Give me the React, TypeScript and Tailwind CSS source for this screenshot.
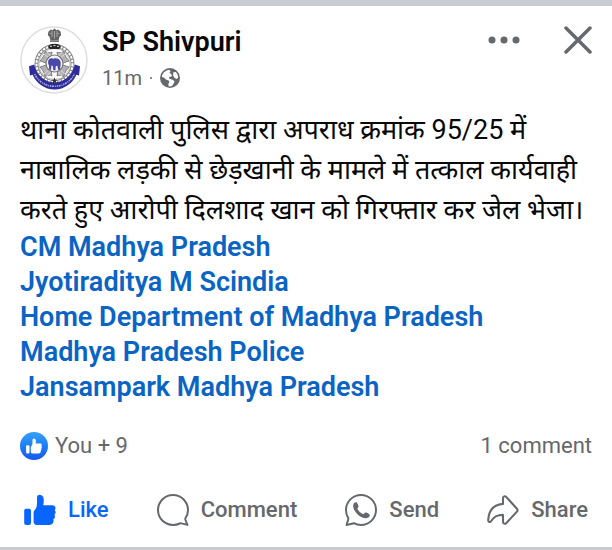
import type { ReactNode } from "react";

interface PostAction {
  label: string;
  icon: ReactNode;
  className: string;
}

const mentions = [
  "CM Madhya Pradesh",
  "Jyotiraditya M Scindia",
  "Home Department of Madhya Pradesh",
  "Madhya Pradesh Police",
  "Jansampark Madhya Pradesh",
];

function ThumbIcon({ className }: { className: string }) {
  return (
    <svg viewBox="0 0 33 32" className={className} fill="currentColor" aria-hidden="true">
      <rect x="0.200" y="14.600" width="7" height="16.800" rx="2" />
      <path d="M12.400 14.200c.7-1.400 1-3 1-4.800V3.600C13.400 1.600 14.400.4 16.200.4c2.700 0 4.200 2.200 4.200 5.200 0 2-.2 3.800-.6 5.400h9.400c2 0 3.300 1.300 3.300 3 0 1-.3 1.700-.8 2.200.6.600.9 1.300.9 2.200 0 1.200-.5 2.100-1.200 2.600.4.500.5 1.100.5 1.800 0 1.400-.7 2.400-1.700 2.800.2.400.3.800.3 1.300 0 2.800-1.500 4.500-4.300 4.500H13.400c-2.300 0-3.500-1.200-3.500-3.500V18.600c0-2.200 1.600-2.600 2.500-4.400Z" />
    </svg>
  );
}

function CommentIcon() {
  return (
    <svg viewBox="0 0 32 32" className="h-8 w-8" fill="none" stroke="currentColor" strokeWidth="2" strokeLinejoin="round" aria-hidden="true">
      <path d="M28.400 24.300C30 22 31 19.200 31 16.200 31 7.800 24.400 1 16 1S1 7.800 1 16s6.600 15 15 15c2.500 0 4.700-.5 6.700-1.500.6-.3 1.200-.3 1.800-.1l5.900 1.500-1.900-4.900c-.2-.6-.3-1.100-.1-1.700Z" />
    </svg>
  );
}

function SendIcon() {
  return (
    <svg viewBox="0 0 32 32" className="h-8 w-8" fill="none" aria-hidden="true">
      <path
        d="M2.900 23.400C1.700 21.200 1 18.700 1 16 1 7.700 7.700 1 16 1s15 6.700 15 15-6.700 15-15 15c-2.600 0-5-.6-7.100-1.800L1.600 31l1.700-6c.1-.6 0-1.100-.4-1.600Z"
        stroke="currentColor"
        strokeWidth="2"
        strokeLinejoin="round"
      />
      <path
        d="M8.800 9.400c.8-1 2.200-1.400 3.100-.6.700.7 1.300 2.200 1.600 3.200.2 1-.4 1.700-1.300 2.600 1.500 2.900 3.300 4.500 6.200 5.700 1-1.200 1.700-2 2.700-1.700 1.100.3 2.400 1 3.200 1.700 1 .8.200 2.500-.9 3.200-3.200 2-7.300-.1-10.200-2.500-3.100-2.700-6.500-7.900-4.400-11.600Z"
        fill="currentColor"
      />
    </svg>
  );
}

function ShareIcon() {
  return (
    <svg viewBox="0 0 34 32" className="h-8 w-8" fill="none" stroke="currentColor" strokeWidth="2.200" strokeLinejoin="round" aria-hidden="true">
      <path d="M17 9.500V3.600c0-2 2-2.900 3.400-1.500l11.400 12.600c.9 1 .9 2 0 3L20.400 30c-1.400 1.300-3.400.4-3.400-1.600v-7.200c-6.800 0-9.700 1.800-12.500 6.400-1.200 2-3.400 1.200-3.200-1.200C2 16 7.600 10.200 17 9.500Z" />
    </svg>
  );
}

function GlobeIcon() {
  return (
    <svg viewBox="0 0 20 20" className="h-5 w-5" aria-hidden="true">
      <circle cx="10" cy="10" r="10" fill="#65686c" />
      <path
        d="M9.500 1.800 6.600 2.400 4 4.200 2.200 7l-.3 2 2 .6 2 2 2.700.9.900 1.500-1.200 2 .3 2.200 1.700.3 2.200-1 1.200-2.200.9-1.900-1.900-1.700-2.500-.6-1.200-.9.300-1.300 2-.3.800-1.400-1.600-1.600-1.300-.9 1.400-1Z"
        fill="#fff"
      />
      <path d="m13.300 4.200 2.600-.2 1.700 2.700.7 2.800-1.700 1.400-2-1-1.500-2.300Z" fill="#fff" />
    </svg>
  );
}

function PoliceCrest() {
  return (
    <svg viewBox="0 0 68 68" className="h-17 w-17 flex-none" role="img" aria-label="Police crest">
      <circle cx="34" cy="34" r="33" fill="#fff" stroke="#dedede" strokeWidth="1.500" />

      {/* chain wreath */}
      <circle cx="34.500" cy="38" r="18" fill="none" stroke="#8a8a8a" strokeWidth="4" />
      <circle cx="34.500" cy="38" r="18" fill="none" stroke="#fff" strokeWidth="2" strokeDasharray="2.400 1.200" />
      <circle cx="34.500" cy="38" r="15.500" fill="none" stroke="#b5b5b5" strokeWidth="0.800" />

      {/* silver cross */}
      <g fill="#b2b2b2" stroke="#6e6e6e" strokeWidth="0.800">
        <path d="M25 25.500c3 1.500 5 1.500 7 .5L31 33l-5 4-6-2c2-2.500 4.500-5 5-9.500Z" />
        <path d="M44 25.500c-3 1.500-5 1.500-7 .5l1 7 5 4 6-2c-2-2.500-4.500-5-5-9.500Z" />
        <path d="M25 50.500c3-1.500 5-1.500 7-.5l-1-7-5-4-6 2c2 2.500 4.500 5 5 9.500Z" />
        <path d="M44 50.500c-3-1.500-5-1.500-7-.5l1-7 5-4 6 2c-2 2.500-4.500 5-5 9.500Z" />
      </g>
      <g stroke="#e8e8e8" strokeWidth="0.800">
        <path d="m24 28 7 6M27 26l5 6M45 28l-7 6M42 26l-5 6M24 48l7-6M27 50l5-6M45 48l-7-6M42 50l-5-6" />
      </g>
      <circle cx="34.500" cy="37.500" r="8.500" fill="#f1f1f8" stroke="#777" strokeWidth="1.200" />
      <path
        d="M28.500 34c1.500-2.200 3.500-2 5-1.200 2-1 5-.5 6.500 1.700 1 2 .8 4 .4 6l-.4 3.300h-2l-.5-4-1.800.5-.2 4h-2.200l-.4-4-1.400-1-.5 4.500h-1.800l-.2-4.500c-1-1-1.200-3.300-.5-5.300Z"
        fill="#4b49a8"
      />

      {/* lion capital */}
      <path d="M28.500 5.500 31 3.500l1.500.8L34.500 2.500l2 1.800 1.500-.8 2.500 2 .7 3.500-1.800 2-.9 3.500h-8l-.9-3.500-1.800-2Z" fill="#636363" />
      <path d="M32 5v6M34.500 5v7.500M37 5v6M29.800 7.500h1.700M37.500 7.500h1.700" stroke="#c4c4c4" strokeWidth="0.700" />
      <path d="M30 15.200h9" stroke="#777" strokeWidth="1.600" />
      <path d="M28 21c1-4.500 12-4.500 13 0l-2 2h-9Z" fill="#252525" />
      <path d="M30 20.300h2M33.500 19.600h2M37 20.300h2" stroke="#eee" strokeWidth="1" />

      {/* ribbon */}
      <path d="M9 40.200 14.200 38.500C16.500 49 24 56 34.500 56.500 45 56 52.500 49 54.800 38.500l5.200 1.700-1 9.300-2.600-.7C52.500 57.500 44.500 63.500 34.500 63.500S16.500 57.500 12.600 48.800l-2.600.7Z" fill="#2d2c98" />
      <path d="M14.500 48c4 7.500 11 12.300 20 12.300S50.500 55.500 54.500 48" fill="none" stroke="#a9a8d9" strokeWidth="1.600" strokeDasharray="1.300 .7 2 .9 1 .8" />
      <path d="m34.500 51.500 1 2.200h2l-1.700 1.500.8 2.300-2.100-1.300-2.100 1.300.8-2.300-1.700-1.500h2Z" fill="#333" />
    </svg>
  );
}

function ReactionBadge() {
  return (
    <span className="flex h-7 w-7 items-center justify-center rounded-full bg-linear-to-b from-[#35a1f8] to-[#1657ee] text-white">
      <ThumbIcon className="h-4 w-4" />
    </span>
  );
}

const actions: PostAction[] = [
  { label: "Like", icon: <ThumbIcon className="h-8 w-8" />, className: "text-[#0866ff]" },
  { label: "Comment", icon: <CommentIcon />, className: "text-[#65686c]" },
  { label: "Send", icon: <SendIcon />, className: "text-[#65686c]" },
  { label: "Share", icon: <ShareIcon />, className: "text-[#65686c]" },
];

export default function App() {
  return (
    <article className="border-t-6 border-b-3 border-t-[#c9ccd1] border-b-[#c9cacf] bg-white font-['Roboto','Noto_Sans',sans-serif] text-[#080809]">
      <header className="flex items-start px-5 pt-5">
        <PoliceCrest />
        <div className="ml-3.5 flex-1">
          <h1 className="text-[27px] leading-8 font-semibold">SP Shivpuri</h1>
          <div className="mt-1 flex items-center gap-2 text-[20px] leading-8 text-[#65686c]">
            <span>11m</span>
            <span className="h-0.5 w-0.5 rounded-full bg-current" />
            <GlobeIcon />
          </div>
        </div>
        <div className="flex items-center gap-11 text-[#65686c]">
          <button type="button" aria-label="More options">
            <svg viewBox="0 0 32 8" className="h-2 w-8" fill="currentColor">
              <circle cx="4" cy="4" r="3.500" />
              <circle cx="16" cy="4" r="3.500" />
              <circle cx="28" cy="4" r="3.500" />
            </svg>
          </button>
          <button type="button" aria-label="Close">
            <svg viewBox="0 0 28 28" className="h-7 w-7" stroke="currentColor" strokeWidth="3.500" strokeLinecap="round">
              <path d="m2 2 24 24M26 2 2 26" />
            </svg>
          </button>
        </div>
      </header>

      <div className="px-5 pt-4 text-[27px]">
        <p className="leading-10">
          थाना कोतवाली पुलिस द्वारा अपराध क्रमांक 95/25 में नाबालिक लड़की से छेड़खानी के मामले में तत्काल कार्यवाही करते हुए आरोपी दिलशाद खान को गिरफ्तार कर जेल भेजा।
        </p>
        <ul className="leading-[35px] font-semibold text-[#0a64c4]">
          {mentions.map((name) => (
            <li key={name}>
              <a href="#">{name}</a>
            </li>
          ))}
        </ul>
      </div>

      <div className="mt-[25px] flex items-center justify-between px-5 text-[22px] leading-8 text-[#65686c]">
        <div className="flex items-center gap-[7px]">
          <ReactionBadge />
          <span>You + 9</span>
        </div>
        <a href="#">1 comment</a>
      </div>

      <div className="mt-8 flex items-center justify-between px-6 pb-[21px]">
        {actions.map((action) => (
          <button key={action.label} type="button" className={action.className}>
            <span className="flex items-center gap-3 text-[22px] leading-8 font-medium">
              {action.icon}
              {action.label}
            </span>
          </button>
        ))}
      </div>
    </article>
  );
}
